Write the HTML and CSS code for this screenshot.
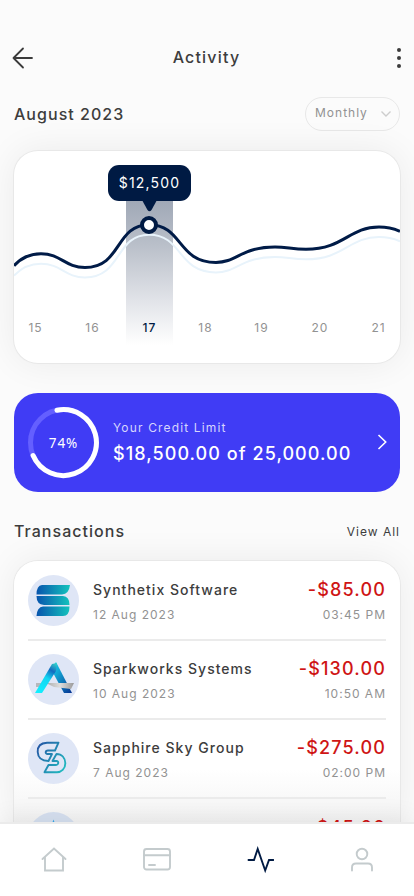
FILE: index.html
```html
<!DOCTYPE html>
<html lang="en">
<head>
<meta charset="utf-8">
<meta name="viewport" content="width=device-width, initial-scale=1">
<title>Activity</title>
<link rel="stylesheet" href="styles.css">
</head>
<body>
<div class="screen">
  <header class="topbar">
    <svg class="back" width="22" height="22" viewBox="0 0 22 22"><path d="M11 1.500 1.500 11l9.500 9.500M1.500 11H20"/></svg>
    <h1 class="title">Activity</h1>
    <svg class="dots" width="6" height="22" viewBox="0 0 6 22"><circle cx="3" cy="3" r="2"/><circle cx="3" cy="11" r="2"/><circle cx="3" cy="19" r="2"/></svg>
  </header>
  <div class="period">
    <h2 class="heading">August 2023</h2>
    <div class="select">Monthly<svg width="12" height="8" viewBox="0 0 12 8"><path d="M1.500 1.500 6 6l4.500-4.500"/></svg></div>
  </div>
  <section class="chart">
    <svg width="386" height="212" viewBox="14 151 386 212">
      <defs>
        <linearGradient id="band" x1="0" y1="0" x2="0" y2="1"><stop offset="0" stop-color="#9aa3b2"/><stop offset=".35" stop-color="#b9bfc9"/><stop offset=".72" stop-color="#e2e4e9"/><stop offset="1" stop-color="#fff"/></linearGradient>
        <path id="curve" d="M14 265.700C21 258 31 253.700 41 253.700C61 253.700 65 267.500 85 267.500C122 267.500 115 224.700 149 224.700C183 224.700 177 262.400 216 262.400C237 262.400 241 247 275 247C287 247 292 249.300 306 249.300C344 249.300 349 227 379 227C387 227 394 228.700 400 231.300"/>
      </defs>
      <rect x="126" y="190" width="47" height="155" fill="url(#band)"/>
      <use href="#curve" y="10" class="line-soft"/>
      <use href="#curve" class="line"/>
      <path class="navy" d="M142 200h15l-5.500 10q-2 2.500-4 0z"/>
      <rect class="navy" x="108" y="165" width="83" height="36" rx="11"/>
      <text class="tip" x="149.500" y="188">$12,500</text>
      <circle class="marker" cx="149" cy="225" r="7"/>
      <g class="days"><text x="35.500" y="332">15</text><text x="92.500" y="332">16</text><text class="active" x="149.500" y="332">17</text><text x="205.500" y="332">18</text><text x="261.500" y="332">19</text><text x="320" y="332">20</text><text x="378.500" y="332">21</text></g>
    </svg>
  </section>
  <section class="credit">
    <svg class="ring" width="72" height="72" viewBox="0 0 72 72"><circle class="ring-track" cx="35.500" cy="35.500" r="33"/><path class="ring-value" d="M29 3.200A33 33 0 1 1 5.100 48.600"/><text x="35.500" y="41">74%</text></svg>
    <div class="credit-copy"><p class="credit-label">Your Credit Limit</p><p class="credit-value">$18,500.00 of 25,000.00</p></div>
    <svg class="chev" width="10" height="16" viewBox="0 0 10 16"><path d="M1.500 1 8.700 8l-7.200 7"/></svg>
  </section>
  <div class="section-head"><h2 class="heading">Transactions</h2><a class="view-all">View All</a></div>
  <section class="list">
    <article class="row">
      <svg class="logo" width="51" height="51" viewBox="0 0 51 51"><defs><linearGradient id="s1" gradientUnits="userSpaceOnUse" x1="8" y1="0" x2="42" y2="0"><stop stop-color="#0752ad"/><stop offset="1" stop-color="#13c4bd"/></linearGradient></defs><circle cx="25.500" cy="25.500" r="25.500" fill="#dfe6f6"/><g fill="url(#s1)"><path d="M14 10H42Q41 19 34 19.500H8.500Q8.500 10.500 14 10z"/><path d="M8.500 21H35Q41.500 21.500 41.500 30H16Q8.500 29.500 8.500 21z"/><path d="M15 31.500H41.500Q41.500 41 35 41H8.500Q9 32 15 31.500z"/></g></svg>
      <div class="who"><p class="name">Synthetix Software</p><p class="sub">12 Aug 2023</p></div>
      <div class="sum"><p class="amount">-$85.00</p><p class="sub">03:45 PM</p></div>
    </article>
    <article class="row">
      <svg class="logo" width="51" height="51" viewBox="0 0 51 51"><defs><linearGradient id="a1" gradientUnits="userSpaceOnUse" x1="10" y1="39" x2="28" y2="9"><stop stop-color="#12f0ff"/><stop offset=".5" stop-color="#12d5f2"/><stop offset=".75" stop-color="#126bc0"/><stop offset="1" stop-color="#38d6c8"/></linearGradient><linearGradient id="a2" x1="0" y1="0" x2="1" y2="1"><stop stop-color="#16dff5"/><stop offset="1" stop-color="#073291"/></linearGradient><linearGradient id="a3"><stop stop-color="#aaa"/><stop offset=".5" stop-color="#ddd"/><stop offset="1" stop-color="#999"/></linearGradient></defs><circle cx="25.500" cy="25.500" r="25.500" fill="#dfe6f6"/><path fill="#b5b8bd" d="M8 29h7l-3 4H8z"/><path fill="url(#a2)" d="M23 15 28 8 44 39H36z"/><path fill="url(#a3)" d="M18 29H46L43 35 26 33z"/><path fill="url(#a1)" d="M24 10 29 9 28 17 14 39H7z"/></svg>
      <div class="who"><p class="name">Sparkworks Systems</p><p class="sub">10 Aug 2023</p></div>
      <div class="sum"><p class="amount">-$130.00</p><p class="sub">10:50 AM</p></div>
    </article>
    <article class="row">
      <svg class="logo" width="51" height="51" viewBox="0 0 51 51"><defs><linearGradient id="g1" gradientUnits="userSpaceOnUse" x1="9" y1="15" x2="38" y2="35"><stop stop-color="#2459a5"/><stop offset="1" stop-color="#21bcc0"/></linearGradient></defs><circle cx="25.500" cy="25.500" r="25.500" fill="#dfe6f6"/><g fill="none" stroke="url(#g1)" stroke-width="1.900" stroke-linejoin="round"><path d="M30.500 9.700H19C12 10 9.500 14 9.700 19C10 25 14 28 20.500 28L24 21H19.500C17 21 17 17.500 20 17.500H27z"/><path d="M28.500 21C34 21 37 25 37.300 30C37.500 36 33 39.300 29 39.300H16.500L20.500 32H27.500C31 32 31 28 28.500 28H24.500z"/></g></svg>
      <div class="who"><p class="name">Sapphire Sky Group</p><p class="sub">7 Aug 2023</p></div>
      <div class="sum"><p class="amount">-$275.00</p><p class="sub">02:00 PM</p></div>
    </article>
    <article class="row last">
      <svg class="logo" width="51" height="51" viewBox="0 0 51 51"><circle cx="25.500" cy="25.500" r="25.500" fill="#d6e0f0"/><path d="M25.500 7.500 37 39H14z" fill="#36a9e8"/></svg>
      <div class="who"><p class="name">North Capital Labels</p></div>
      <div class="sum"><p class="amount">-$45.00</p></div>
    </article>
  </section>
  <nav class="tabs">
    <svg width="28" height="28" viewBox="0 0 28 28"><path d="M2.500 13 14 2.500 25.500 13M5 11v13.500h18V11"/></svg>
    <svg class="card" width="28" height="28" viewBox="0 0 28 28"><rect x="1" y="3" width="26" height="20.500" rx="2.500"/><path d="M1 9.200h26M6 19h6"/></svg>
    <svg class="on" width="28" height="28" viewBox="0 0 28 28"><path d="M2.500 14h5.500L11.700 3l7.500 21.500L23 14h4.500"/></svg>
    <svg width="28" height="28" viewBox="0 0 28 28"><circle cx="14" cy="8" r="5.300"/><path d="M4 24.500v-3q0-4 4-4h12q4 0 4 4v3"/></svg>
  </nav>
</div>
</body>
</html>
```
FILE: styles.css
```css
* { box-sizing: border-box; margin: 0; }
body { background: #fbfbfb; font-family: Inter, "Liberation Sans", sans-serif; color: #3d3d3d; }
svg { display: block; flex: none; }
.screen { height: 896px; overflow: hidden; display: flex; flex-direction: column; background: #fbfbfb; }
.topbar { height: 36px; margin: 40px 12px 0; display: flex; align-items: center; justify-content: space-between; flex: none; }
.back { fill: none; stroke: #3b3b3b; stroke-width: 1.8; stroke-linecap: round; stroke-linejoin: round; }
.dots { fill: #3b3b3b; }
.title { position: relative; top: -1px; font-size: 16px; font-weight: 500; letter-spacing: 1.2px; padding-right: 17px; }
.heading { font-size: 16px; font-weight: 500; letter-spacing: 1.03px; }
.period { flex: none; display: flex; align-items: center; justify-content: space-between; height: 34px; margin: 21px 14px 0; }
.select { width: 95px; height: 34px; border: 1px solid #e8e8e8; border-radius: 17px; display: flex; align-items: center; justify-content: space-between; padding: 0 7px 2px 9px; font-size: 12px; line-height: 16px; letter-spacing: 1px; color: #929292; }
.select svg { fill: none; stroke: #cdcdcd; stroke-width: 1.4; position: relative; top: 1px; }
.chart { flex: none; height: 212px; margin: 20px 14px 0; border-radius: 24px; background: #fff; overflow: hidden; box-shadow: 0 0 0 1px #e8e8e8, 0 0 36px rgba(0, 0, 0, .07); }
.line, .line-soft { fill: none; }
.line { stroke: #001b47; stroke-width: 3; }
.line-soft { stroke: #e8f3fb; stroke-width: 2; }
.navy { fill: #001a43; }
.tip { fill: #fff; font-size: 14px; letter-spacing: 1.15px; text-anchor: middle; }
.marker { fill: #fff; stroke: #001a43; stroke-width: 4; }
.days { font-size: 12px; letter-spacing: 1px; fill: #929292; text-anchor: middle; }
.days .active { fill: #001a43; font-weight: 500; }
.credit { flex: none; height: 99px; margin: 30px 14px 0; padding: 0 13px 0 14px; border-radius: 24px; background: #403cf5; color: #fff; display: flex; align-items: center; }
.ring { fill: none; }
.ring-track { stroke: #645fff; stroke-width: 5; }
.ring-value { stroke: #fff; stroke-width: 5; stroke-linecap: round; }
.ring text { fill: #fff; font: 13.5px "Noto Sans", sans-serif; letter-spacing: 1px; text-anchor: middle; }
.credit-copy { margin-left: 13px; flex: 1; white-space: nowrap; }
.credit-label { font-size: 12px; line-height: 16px; letter-spacing: 1.15px; color: #d6d5fd; }
.credit-value { font-size: 18px; line-height: 24px; margin-top: 6px; letter-spacing: 1.06px; font-weight: 500; }
.chev { fill: none; stroke: #fff; stroke-width: 1.6; position: relative; top: -1px; }
.section-head { flex: none; height: 24px; margin: 27px 14px 0; display: flex; align-items: center; justify-content: space-between; }
.view-all { font-size: 12px; letter-spacing: 1px; }
.list { flex: 1; min-height: 0; overflow: hidden; margin: 18px 14px 0; padding: 1px 14px 0; border-radius: 24px 24px 0 0; background: linear-gradient(#fff 80%, #f3f3f3); box-shadow: 0 0 0 1px #e8e8e8, 0 0 36px rgba(0, 0, 0, .07); }
.row { height: 79px; display: flex; align-items: flex-start; padding-top: 13px; border-bottom: 2px solid #ebebeb; white-space: nowrap; }
.who { margin-left: 14px; flex: 1; padding-top: 5px; }
.last .who, .last .sum { padding-top: 6px; }
.name { font-size: 14px; line-height: 20px; letter-spacing: 1.02px; font-weight: 500; }
.sub { font-size: 12px; line-height: 16px; letter-spacing: 1px; color: #929292; margin-top: 7px; }
.sum { text-align: right; padding-top: 5px; }
.amount { font-size: 18px; line-height: 20px; letter-spacing: 1.15px; font-weight: 500; color: #cf1515; }
.tabs { position: relative; flex: none; height: 74px; padding: 22px 38px 0 40px; display: flex; justify-content: space-between; background: #fff; border-top: 2px solid #ebebeb; box-shadow: 0 -4px 24px rgba(0, 0, 0, .07); }
.tabs svg { fill: none; stroke: #c4cbcd; stroke-width: 1.9; stroke-linecap: round; }
.tabs .card { margin-left: 1px; }
.tabs .on { stroke: #001a43; margin-left: 1px; }
```
